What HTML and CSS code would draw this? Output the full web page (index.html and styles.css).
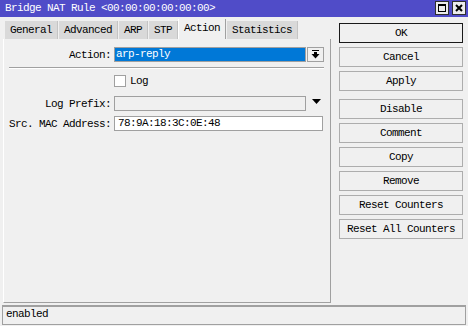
FILE: index.html
```html
<!DOCTYPE html>
<html lang="en">
<head>
  <meta charset="UTF-8">
  <title>Bridge NAT Rule</title>
  <link rel="stylesheet" href="styles.css">
</head>
<body>
  <div class="window">
    <div class="titlebar">
      <span class="title">Bridge NAT Rule &lt;00:00:00:00:00:00&gt;</span>
      <div class="title-buttons">
        <span class="tbtn">
          <svg width="12" height="12" viewBox="0 0 12 12"><rect x="2.5" y="2.5" width="7" height="7" fill="none" stroke="#000"/><rect x="2" y="2" width="8" height="2" fill="#000"/></svg>
        </span>
        <span class="tbtn">
          <svg width="12" height="12" viewBox="0 0 12 12"><path d="M3 3 L9 9 M9 3 L3 9" stroke="#000" stroke-width="2"/></svg>
        </span>
      </div>
    </div>

    <div class="main">
      <div class="left">
        <div class="tabs">
          <span class="tab">General</span>
          <span class="tab">Advanced</span>
          <span class="tab">ARP</span>
          <span class="tab">STP</span>
          <span class="tab active">Action</span>
          <span class="tab">Statistics</span>
        </div>

        <div class="panel">
          <div class="row row-action">
            <span class="label">Action:</span>
            <div class="field">
              <span class="select">arp-reply</span>
              <span class="drop-btn">
                <svg width="9" height="9" viewBox="0 0 9 9"><rect x="1" y="0" width="7" height="1" fill="#000"/><rect x="3" y="2" width="3" height="2" fill="#000"/><polygon points="0.5,4 8.5,4 4.5,8.5" fill="#000"/></svg>
              </span>
            </div>
          </div>

          <div class="separator"></div>

          <div class="row row-log">
            <span class="label"></span>
            <label class="check"><span class="box"></span>Log</label>
          </div>

          <div class="row row-prefix">
            <span class="label">Log Prefix:</span>
            <div class="field">
              <span class="input disabled"></span>
              <svg class="tri" width="9" height="5" viewBox="0 0 9 5"><polygon points="0,0 9,0 4.5,5" fill="#000"/></svg>
            </div>
          </div>

          <div class="row row-mac">
            <span class="label">Src. MAC Address:</span>
            <div class="field">
              <span class="input wide">78:9A:18:3C:0E:48</span>
            </div>
          </div>
        </div>
      </div>

      <div class="buttons">
        <span class="btn default">OK</span>
        <span class="btn">Cancel</span>
        <span class="btn">Apply</span>
        <span class="btn group-start">Disable</span>
        <span class="btn">Comment</span>
        <span class="btn">Copy</span>
        <span class="btn">Remove</span>
        <span class="btn">Reset Counters</span>
        <span class="btn">Reset All Counters</span>
      </div>
    </div>

    <div class="statusbar">enabled</div>
  </div>
</body>
</html>
```

FILE: styles.css
```css
body {
  margin: 0;
  background-color: #f0f0f0;
  font-family: "Liberation Mono", "Courier New", monospace;
  font-size: 11px;
  letter-spacing: -0.6px;
  color: #000;
}
.window {
  width: 468px;
  height: 326px;
  display: flex;
  flex-direction: column;
}
.titlebar {
  height: 17px;
  background-color: #504cc8;
  color: #fff;
  display: flex;
  align-items: center;
  justify-content: space-between;
  padding: 0 2px 0 5px;
}
.title {
  line-height: 17px;
}
.title-buttons {
  display: flex;
  gap: 3px;
  align-self: flex-start;
  margin-top: 1px;
}
.tbtn {
  width: 12px;
  height: 12px;
  border: 1px solid #303030;
  background-color: #ececec;
  display: flex;
}
.main {
  display: flex;
  height: 286px;
  padding-left: 3px;
}
.left {
  width: 328px;
  display: flex;
  flex-direction: column;
}
.tabs {
  display: flex;
  align-items: flex-end;
  height: 22px;
  padding-left: 2px;
}
.tab {
  height: 18px;
  line-height: 18px;
  padding: 0 5px;
  margin-right: 1px;
  background-color: #d9d9d9;
  border-right: 1px solid #c4c4c4;
}
.tab.active {
  height: 20px;
  line-height: 19px;
  background-color: #f0f0f0;
  border-left: 1px solid #fff;
  border-right: 1px solid #a0a0a0;
  margin-left: -1px;
}
.panel {
  flex: 1;
  border-left: 1px solid #fff;
  border-right: 1px solid #a0a0a0;
  border-bottom: 1px solid #a0a0a0;
  padding-top: 8px;
}
.row {
  display: grid;
  grid-template-columns: 107px 210px;
  column-gap: 3px;
  align-items: center;
}
.label {
  text-align: right;
}
.field {
  display: flex;
  align-items: center;
}
.select {
  width: 192px;
  height: 15px;
  box-sizing: border-box;
  border: 1px solid #a0a0a0;
  background-color: #0078d7;
  color: #fff;
  padding-left: 1px;
  line-height: 13px;
}
.drop-btn {
  width: 17px;
  height: 15px;
  box-sizing: border-box;
  margin-left: 1px;
  border: 1px solid #a0a0a0;
  background-color: #f0f0f0;
  display: flex;
  align-items: center;
  justify-content: center;
}
.separator {
  margin: 5px 0 0 5px;
  width: 315px;
  height: 1px;
  background-color: #a0a0a0;
  border-bottom: 1px solid #fff;
}
.row-log {
  margin-top: 6px;
}
.check {
  display: flex;
  align-items: center;
  gap: 4px;
  height: 12px;
}
.box {
  width: 12px;
  height: 12px;
  box-sizing: border-box;
  border: 1px solid #a0a0a0;
  background-color: #fff;
}
.row-prefix {
  margin-top: 9px;
}
.row-mac {
  margin-top: 5px;
}
.input {
  width: 192px;
  height: 15px;
  box-sizing: border-box;
  border: 1px solid #a0a0a0;
  background-color: #fff;
  padding-left: 3px;
  line-height: 13px;
}
.input.disabled {
  background-color: #f0f0f0;
}
.input.wide {
  width: 209px;
}
.tri {
  margin-left: 6px;
  margin-top: -4px;
}
.buttons {
  width: 124px;
  margin-left: 8px;
  padding-top: 6px;
  display: flex;
  flex-direction: column;
  gap: 4px;
}
.btn {
  height: 20px;
  box-sizing: border-box;
  border: 1px solid #adadad;
  background-color: #f0f0f0;
  text-align: center;
  line-height: 18px;
}
.btn.default {
  border-color: #1a1a1a;
}
.btn.group-start {
  margin-top: 4px;
}
.statusbar {
  margin: 2px 2px 0 2px;
  height: 20px;
  box-sizing: border-box;
  border: 1px solid #a0a0a0;
  border-top-width: 2px;
  padding-left: 3px;
  line-height: 15px;
}
```
